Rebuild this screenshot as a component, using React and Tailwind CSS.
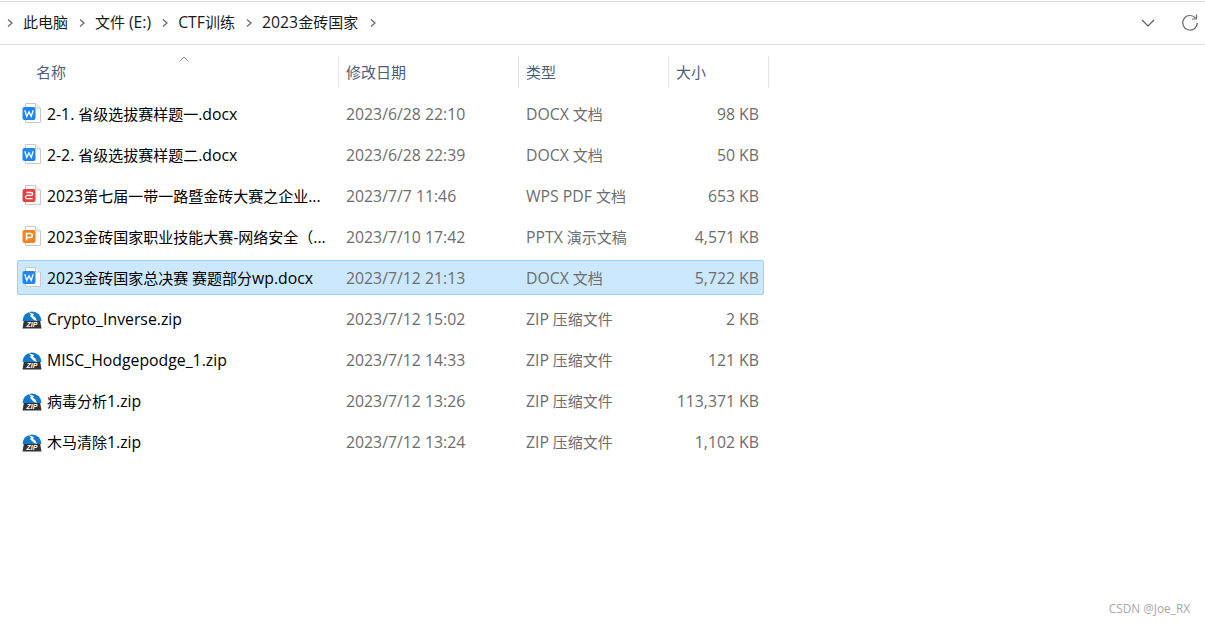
const FONT = { fontFamily: '"Open Sans", "Noto Sans CJK SC", sans-serif' };

function T({ children }) {
  const parts = String(children).split(/([\x21-\x7e]+(?: [\x21-\x7e]+)*)/);
  return (
    <>
      {parts.map((p, i) =>
        i % 2 === 1 ? (
          <span key={i} className="text-[15.8px]">{p}</span>
        ) : (
          p
        )
      )}
    </>
  );
}

function Chevron() {
  return (
    <svg width="8" height="10" viewBox="0 0 8 10" className="shrink-0" fill="none" stroke="#6b6b6b" strokeWidth="1.3">
      <path d="M2 1.5 L6 5 L2 8.5" />
    </svg>
  );
}

function DocIcon({ color, kind }) {
  return (
    <svg width="20" height="22" viewBox="0 0 20 22" className="shrink-0">
      <path d="M3.5 0.5 H13.5 L18.5 5 V19.5 H3.5 Z" fill="#fff" stroke="#c9c9c9" strokeWidth="1" />
      <path d="M13.5 0.5 V5 H18.5" fill="#f2f2f2" stroke="#c9c9c9" strokeWidth="1" />
      <rect x="0.5" y="4" width="13" height="13" rx="2" fill={color} />
      {kind === "w" && <path d="M2.8 7.2 L4.8 13.5 L7 8.8 L9.2 13.5 L11.2 7.2" fill="none" stroke="#fff" strokeWidth="1.3" />}
      {kind === "p" && <path d="M4.5 14.2 V7.5 H8.5 Q10.3 7.5 10.3 9.5 Q10.3 11.5 8.5 11.5 H4.5" fill="none" stroke="#fff" strokeWidth="1.6" />}
      {kind === "pdf" && <path d="M4.5 7.5 H9 Q10.7 7.5 10.7 9 Q10.7 10.3 9 10.3 H6 Q3.5 10.3 3.5 12.2 Q3.5 13.7 5 13.7 H10.5" fill="none" stroke="#fff" strokeWidth="1.3" />}
    </svg>
  );
}

function ZipIcon() {
  return (
    <svg width="20" height="20" viewBox="0 0 20 20" className="shrink-0">
      <path d="M0.5 12 A9.5 9.5 0 1 1 19.5 12 Z" fill="#1278c9" />
      <path d="M6 3 L9 5.5 L8 7 L12 11 L15 12 L13 8 L11 7 L12 5 Z" fill="#fff" />
      <path d="M1.8 12 H18.2 L19.5 19.5 H0.5 Z" fill="#333333" />
      <text x="10" y="18.2" textAnchor="middle" fontSize="7" fontWeight="700" fontStyle="italic" fill="#fff" fontFamily="Liberation Sans">ZIP</text>
    </svg>
  );
}

const rows = [
  { name: "2-1. 省级选拔赛样题一.docx", date: "2023/6/28 22:10", type: "DOCX 文档", size: "98 KB", icon: "w" },
  { name: "2-2. 省级选拔赛样题二.docx", date: "2023/6/28 22:39", type: "DOCX 文档", size: "50 KB", icon: "w" },
  { name: "2023第七届一带一路暨金砖大赛之企业...", date: "2023/7/7 11:46", type: "WPS PDF 文档", size: "653 KB", icon: "pdf" },
  { name: "2023金砖国家职业技能大赛-网络安全（...", date: "2023/7/10 17:42", type: "PPTX 演示文稿", size: "4,571 KB", icon: "p" },
  { name: "2023金砖国家总决赛 赛题部分wp.docx", date: "2023/7/12 21:13", type: "DOCX 文档", size: "5,722 KB", icon: "w", selected: true },
  { name: "Crypto_Inverse.zip", date: "2023/7/12 15:02", type: "ZIP 压缩文件", size: "2 KB", icon: "zip" },
  { name: "MISC_Hodgepodge_1.zip", date: "2023/7/12 14:33", type: "ZIP 压缩文件", size: "121 KB", icon: "zip" },
  { name: "病毒分析1.zip", date: "2023/7/12 13:26", type: "ZIP 压缩文件", size: "113,371 KB", icon: "zip" },
  { name: "木马清除1.zip", date: "2023/7/12 13:24", type: "ZIP 压缩文件", size: "1,102 KB", icon: "zip" },
];

function FileIcon({ kind }) {
  if (kind === "zip") return <ZipIcon />;
  if (kind === "pdf") return <DocIcon color="#e8403f" kind="pdf" />;
  if (kind === "p") return <DocIcon color="#f5821f" kind="p" />;
  return <DocIcon color="#1e86f0" kind="w" />;
}

function Row({ r }) {
  return (
    <div className={"flex items-center h-[35px] rounded-[2px] border text-[15px] " + (r.selected ? "bg-[#cce8ff] border-[#99d1ff]" : "border-transparent")}>
      <div className="w-[321px] flex items-center pl-[4px] gap-[5px] text-black whitespace-nowrap">
        <FileIcon kind={r.icon} />
        <span className="pt-[2px]"><T>{r.name}</T></span>
      </div>
      <div className="w-[180px] pl-[7px] pt-[2px] text-[#6d6d6d] whitespace-nowrap"><T>{r.date}</T></div>
      <div className="w-[150px] pl-[7px] pt-[2px] text-[#6d6d6d] whitespace-nowrap"><T>{r.type}</T></div>
      <div className="w-[90px] pt-[2px] text-right text-[#6d6d6d] whitespace-nowrap"><T>{r.size}</T></div>
    </div>
  );
}

function Head({ label, className }) {
  return (
    <div className={"flex items-center h-[32px] border-r border-[#e5e5e5] text-[15px] text-[#4c607a] " + className}>
      {label}
    </div>
  );
}

export default function App() {
  return (
    <div style={FONT} className="relative w-[1205px] h-[623px] bg-white overflow-hidden">
      <div className="mt-[1px] h-[44px] border-t border-b border-[#dcdcdc] flex items-center text-[15px] text-[#1a1a1a] pb-[1px]">
        <div className="pl-[6px] flex items-center">
          <Chevron />
          <span className="ml-[9px]">此电脑</span>
          <span className="mx-[9.5px]"><Chevron /></span>
          <span><T>文件 (E:)</T></span>
          <span className="mx-[9.5px]"><Chevron /></span>
          <span><T>CTF训练</T></span>
          <span className="mx-[9.5px]"><Chevron /></span>
          <span><T>2023金砖国家</T></span>
          <span className="ml-[11px]"><Chevron /></span>
        </div>
        <div className="ml-auto flex items-center gap-[25px] pr-[6px]">
          <svg width="16" height="10" viewBox="0 0 16 10" fill="none" stroke="#5a5a5a" strokeWidth="1.2">
            <path d="M2 2 L8 8 L14 2" />
          </svg>
          <svg width="18" height="18" viewBox="0 0 18 18" fill="none" stroke="#6a6a6a" strokeWidth="1.2">
            <path d="M14.5 4 A7.3 7.3 0 1 0 16.3 9" />
            <path d="M15.5 0.5 V5 H11" />
          </svg>
        </div>
      </div>

      <div className="relative flex mt-[11px] h-[32px]">
        <svg width="12" height="7" viewBox="0 0 12 7" fill="none" stroke="#8a8a8a" strokeWidth="1" className="absolute left-[178px] top-0">
          <path d="M1.5 5.5 L6 1 L10.5 5.5" />
        </svg>
        <Head label="名称" className="w-[339px] pl-[36px]" />
        <Head label="修改日期" className="w-[180px] pl-[7px]" />
        <Head label="类型" className="w-[150px] pl-[7px]" />
        <Head label="大小" className="w-[100px] pl-[7px]" />
      </div>

      <div className="ml-[17px] w-[747px] mt-[8px] flex flex-col gap-[6px]">
        {rows.map((r) => (
          <Row key={r.name} r={r} />
        ))}
      </div>

      <div className="absolute right-[15px] top-[600px] text-[11.8px] text-[#a8a8a8]">CSDN @Joe_RX</div>
    </div>
  );
}
